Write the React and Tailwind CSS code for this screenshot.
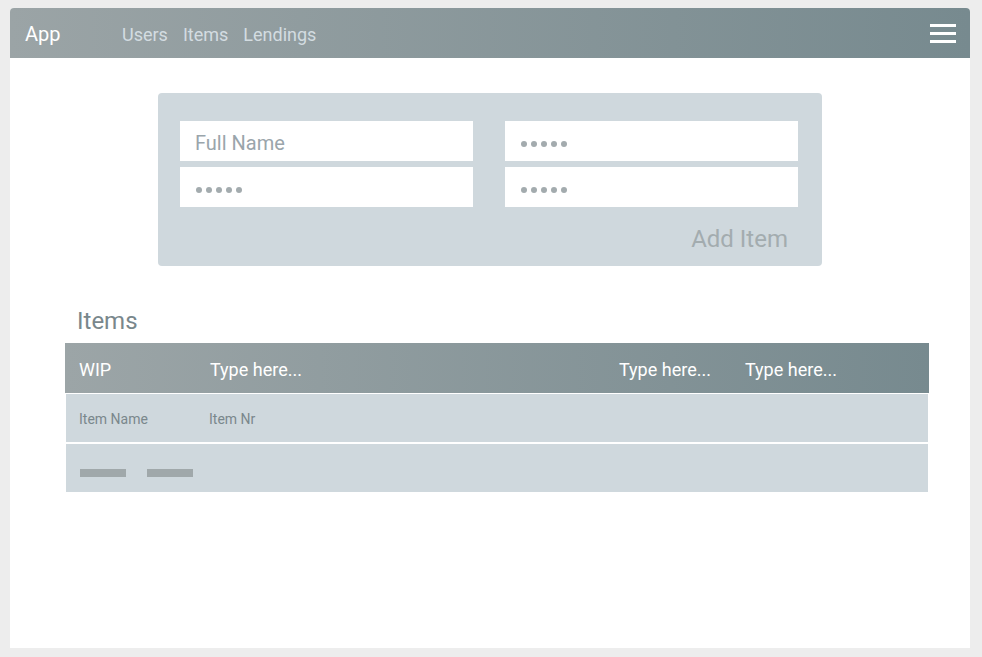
import React from "react";

function Dots() {
  return (
    <div className="flex gap-[4px] mt-[6px]">
      {[0, 1, 2, 3, 4].map((i) => (
        <span key={i} className="block w-[6px] h-[6px] rounded-full bg-[#a3abae]" />
      ))}
    </div>
  );
}

export default function App() {
  const font = { fontFamily: "Roboto, 'Liberation Sans', sans-serif" };
  return (
    <div className="w-[982px] h-[657px] bg-[#ededed] pt-[8px] pl-[10px]" style={font}>
      <div className="w-[960px] h-[640px] bg-white rounded-t-[4px] flex flex-col">
        <nav className="h-[50px] rounded-t-[4px] bg-linear-to-r from-[#9ba4a6] to-[#778a8f] flex items-center pl-[15px] pr-[14px]">
          <span className="text-white text-[20px] w-[97px] pt-[2px]">App</span>
          <div className="flex gap-[15px] text-[18px] text-[#d3dce1] pt-[3px]">
            <span>Users</span>
            <span>Items</span>
            <span>Lendings</span>
          </div>
          <div className="ml-auto flex flex-col gap-[5px]">
            <div className="w-[26px] h-[3px] bg-white" />
            <div className="w-[26px] h-[3px] bg-white" />
            <div className="w-[26px] h-[3px] bg-white" />
          </div>
        </nav>

        <div className="mt-[35px] self-center w-[664px] h-[173px] bg-[#cfd8dd] rounded-[4px] pt-[28px] pl-[22px] pr-[24px]">
          <div className="grid grid-cols-2 gap-x-[32px] gap-y-[6px]">
            <div className="h-[40px] bg-white flex items-center pl-[15px] pt-[3px] text-[20px] text-[#9aa5ab]">Full Name</div>
            <div className="h-[40px] bg-white flex items-center pl-[16px]"><Dots /></div>
            <div className="h-[40px] bg-white flex items-center pl-[16px]"><Dots /></div>
            <div className="h-[40px] bg-white flex items-center pl-[16px]"><Dots /></div>
          </div>
          <div className="flex justify-end pr-[10px] mt-[17px] text-[24px] text-[#a3acaf] leading-[30px]">Add Item</div>
        </div>

        <div className="mt-[40px] ml-[67px] text-[24px] text-[#79878c] leading-[30px]">Items</div>

        <div className="mt-[7px] ml-[55px] w-[864px]">
          <div className="h-[50px] bg-linear-to-r from-[#9ca5a7] to-[#778a8f] flex items-center text-white text-[18px] pt-[3px]">
            <span className="pl-[14px] w-[145px]">WIP</span>
            <span className="w-[409px]">Type here...</span>
            <span className="w-[126px]">Type here...</span>
            <span>Type here...</span>
          </div>
          <div className="mt-[1px] mx-[1px] h-[48px] bg-[#cfd8dd] flex items-center text-[14px] text-[#7a878c] pt-[2px]">
            <span className="pl-[13px] w-[143px]">Item Name</span>
            <span>Item Nr</span>
          </div>
          <div className="mt-[2px] mx-[1px] h-[48px] bg-[#cfd8dd] flex items-center gap-[21px] pl-[14px] pt-[10px]">
            <div className="w-[46px] h-[8px] bg-[#a0a8aa]" />
            <div className="w-[46px] h-[8px] bg-[#a0a8aa]" />
          </div>
        </div>
      </div>
    </div>
  );
}
